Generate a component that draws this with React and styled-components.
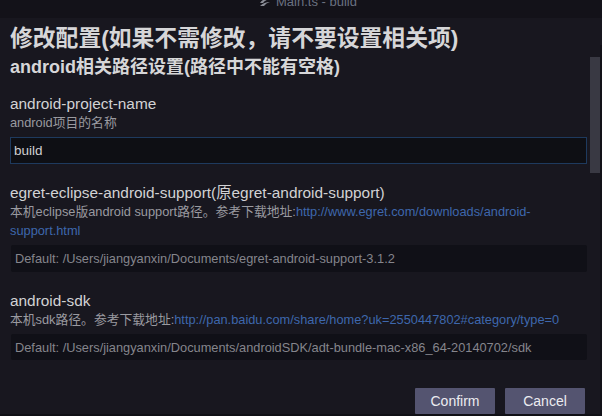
import React from "react";
import styled, { createGlobalStyle } from "styled-components";

const GlobalStyle = createGlobalStyle`
  html, body { margin: 0; padding: 0; background: #18171f; }
  body {
    font-family: "Liberation Sans", "Noto Sans CJK SC", Arial, sans-serif;
    -webkit-font-smoothing: antialiased;
  }
`;

const Window = styled.div`
  position: relative;
  width: 602px;
  height: 416px;
  display: flex;
  flex-direction: column;
  overflow: hidden;
  background: #18171f;
`;

const TitleBar = styled.div`
  height: 18px;
  flex: none;
  background: #131219;
  display: flex;
  justify-content: center;
  align-items: flex-start;
  gap: 5px;
  overflow: hidden;
  padding-left: 14px;
  color: #6a7181;
  font-size: 13px;
`;

const TitleText = styled.span`
  line-height: 14px;
  margin-top: -5px;
`;

const TitleIcon = styled.svg`
  margin-top: -3px;
  flex: none;
`;

const Content = styled.div`
  flex: 1;
  padding: 7px 16px 0 10px;
  display: flex;
  flex-direction: column;
`;

const H1 = styled.h1`
  margin: 0;
  font-size: 22.8px;
  line-height: 26px;
  font-weight: bold;
  color: #d6d6d8;
`;

const H2 = styled.h2`
  margin: 5px 0 0;
  font-size: 18px;
  line-height: 22px;
  font-weight: bold;
  color: #d6d6d8;
`;

const Fields = styled.div`
  display: flex;
  flex-direction: column;
  gap: 20px;
  margin-top: 17px;
`;

const Field = styled.div`
  display: flex;
  flex-direction: column;
`;

const Label = styled.div`
  font-size: 15.4px;
  line-height: 18px;
  color: #d2d2d4;
`;

const Desc = styled.div`
  font-size: 12.8px;
  line-height: 19px;
  color: #9a9aa0;
  margin-bottom: 5px;
`;

const Link = styled.a`
  color: #3e67ad;
  text-decoration: none;
`;

const Input = styled.input`
  box-sizing: border-box;
  width: 577px;
  height: 27px;
  margin: 0;
  padding: 0 0 0 3px;
  background: #0e0f14;
  border: 1px solid #1e3a5e;
  color: #d0d0d2;
  font-family: inherit;
  font-size: 13.5px;
  outline: none;
`;

const DefaultBox = styled.div`
  box-sizing: border-box;
  width: 576px;
  height: ${(p) => p.h || 27}px;
  margin-left: 1px;
  padding-left: 4px;
  display: flex;
  align-items: center;
  background: #101017;
  border-radius: 2px;
  color: #85858c;
  font-size: 12.8px;
  white-space: nowrap;
  overflow: hidden;
`;

const Footer = styled.div`
  display: flex;
  justify-content: flex-end;
  gap: 10px;
  margin-top: 28px;
  padding-right: 1px;
`;

const Button = styled.button`
  width: 80px;
  height: 26px;
  border: none;
  border-radius: 1px;
  background: #545470;
  color: #ececf0;
  font-family: inherit;
  font-size: 14px;
  padding: 0;
  cursor: pointer;
`;

const BottomStrip = styled.div`
  height: 3px;
  flex: none;
  background: #101016;
`;

const Scrollbar = styled.div`
  position: absolute;
  left: 590px;
  top: 57px;
  width: 10px;
  height: 116px;
  background: #393943;
`;

const EdgeStrip = styled.div`
  position: absolute;
  right: 0;
  top: 45px;
  width: 2px;
  bottom: 0;
  background: #121118;
`;

export default function App() {
  return (
    <>
      <GlobalStyle />
      <Window>
        <TitleBar>
          <TitleIcon width="12" height="10" viewBox="0 0 12 10">
            <path d="M1 6 Q4 1 11 2 Q6 3 4 6 Z" fill="#8a8d96" />
            <path d="M1 9 Q5 5 11 5 Q7 6 5 9 Z" fill="#8a8d96" />
          </TitleIcon>
          <TitleText>Main.ts - build</TitleText>
        </TitleBar>
        <Content>
          <H1>修改配置(如果不需修改，请不要设置相关项)</H1>
          <H2>android相关路径设置(路径中不能有空格)</H2>
          <Fields>
            <Field>
              <Label>android-project-name</Label>
              <Desc>android项目的名称</Desc>
              <Input defaultValue="build" />
            </Field>
            <Field>
              <Label>egret-eclipse-android-support(原egret-android-support)</Label>
              <Desc>
                本机eclipse版android support路径。参考下载地址:
                <Link>http://www.egret.com/downloads/android-support.html</Link>
              </Desc>
              <DefaultBox>Default: /Users/jiangyanxin/Documents/egret-android-support-3.1.2</DefaultBox>
            </Field>
            <Field>
              <Label>android-sdk</Label>
              <Desc>
                本机sdk路径。参考下载地址:
                <Link>http://pan.baidu.com/share/home?uk=2550447802#category/type=0</Link>
              </Desc>
              <DefaultBox h={26}>Default: /Users/jiangyanxin/Documents/androidSDK/adt-bundle-mac-x86_64-20140702/sdk</DefaultBox>
            </Field>
          </Fields>
          <Footer>
            <Button>Confirm</Button>
            <Button>Cancel</Button>
          </Footer>
        </Content>
        <BottomStrip />
        <Scrollbar />
        <EdgeStrip />
      </Window>
    </>
  );
}
